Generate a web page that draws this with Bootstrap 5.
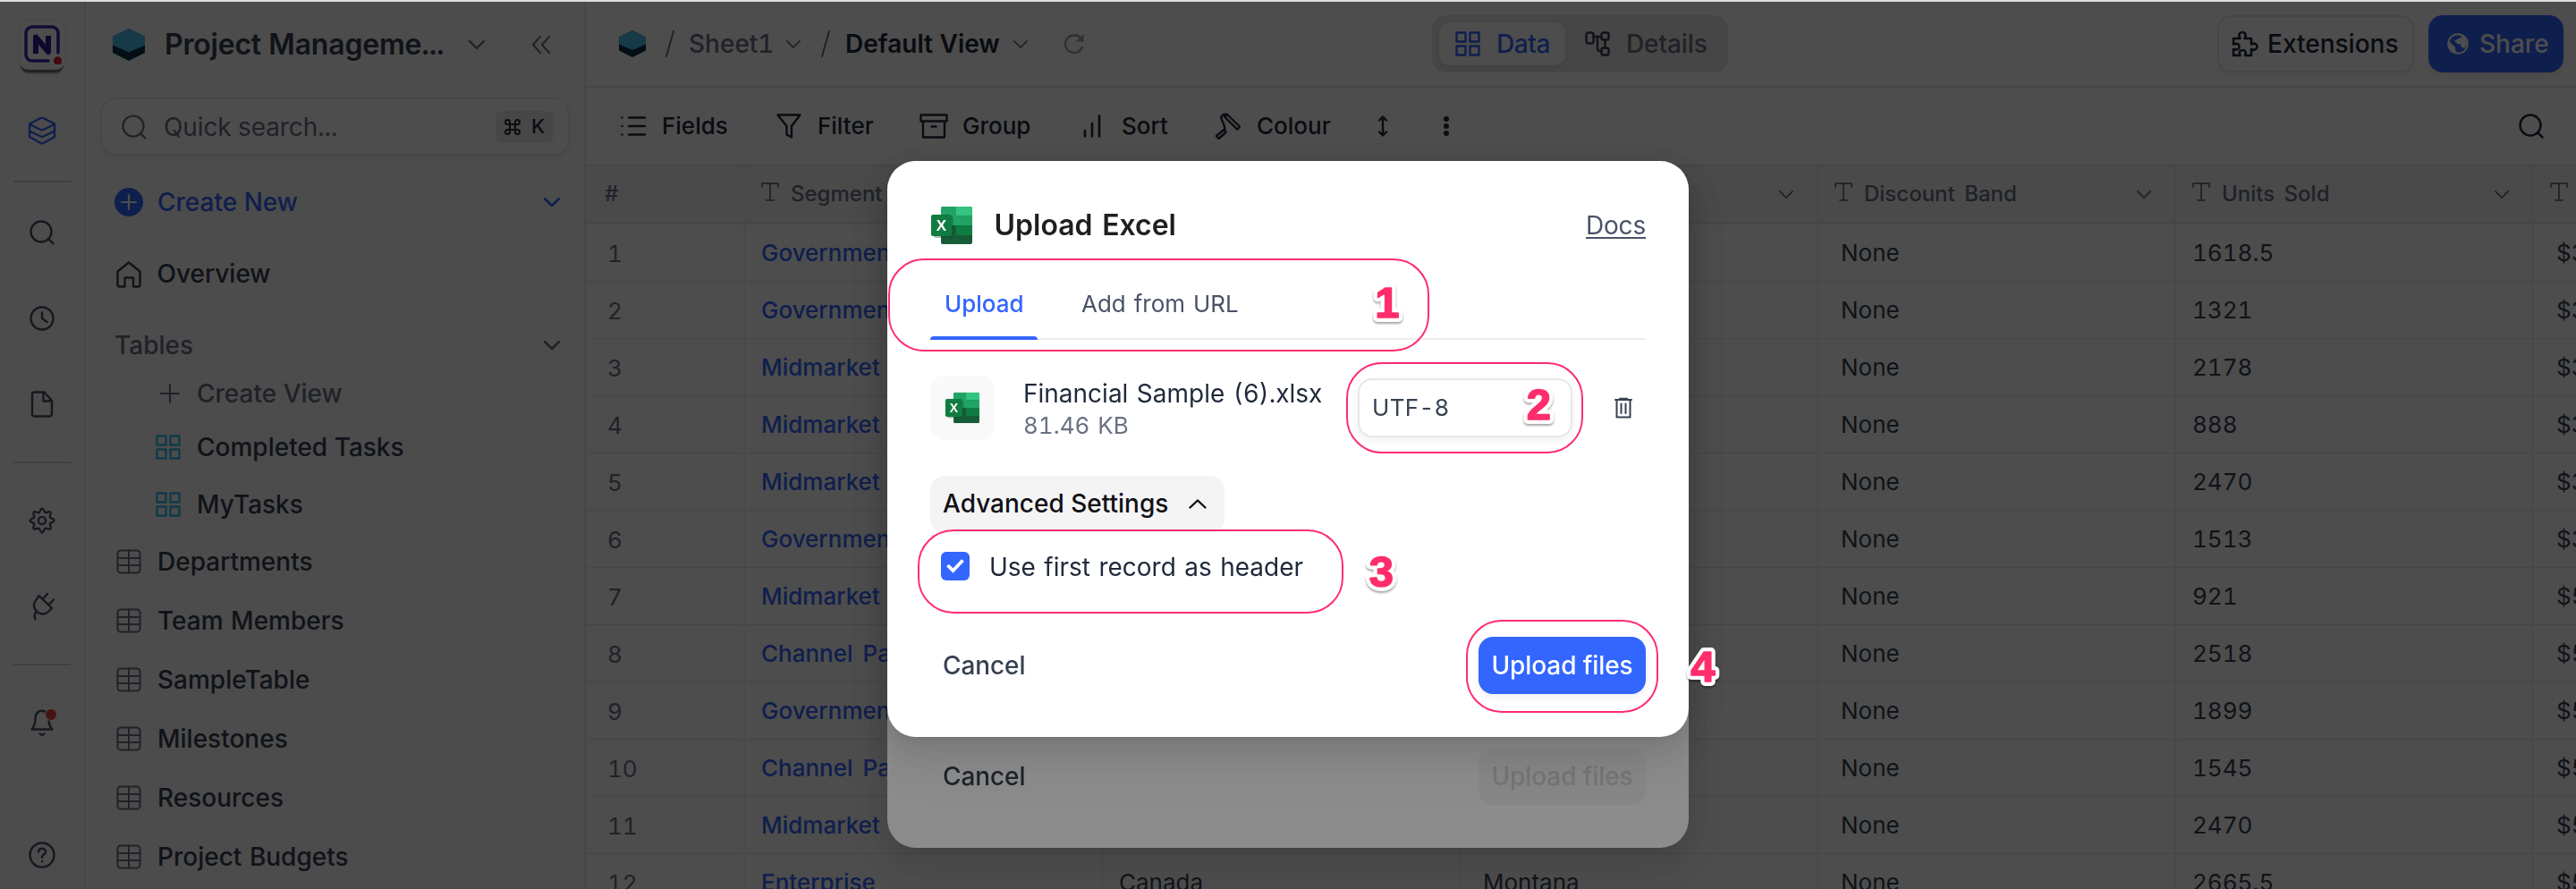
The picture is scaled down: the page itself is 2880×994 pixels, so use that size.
<!DOCTYPE html>
<html lang="en">
<head>
<meta charset="utf-8">
<title>Upload Excel</title>
<link href="https://cdn.jsdelivr.net/npm/bootstrap@5.3.0/dist/css/bootstrap.min.css" rel="stylesheet">
<style>
  html, body { height: 100%; overflow: hidden; }
  body { font-family: Inter, "Liberation Sans", sans-serif; font-feature-settings: "tnum"; font-size: 28px; line-height: 1.25; color: #374151; background: #dcdee0; stroke-width: 2; }
  svg { fill: none; stroke: currentColor; stroke-linecap: round; stroke-linejoin: round; flex: none; display: block; }
  .app { height: 992px; margin-top: 2px; background: #fff; white-space: nowrap; }
  .rail { width: 96px; background: #fafafa; border-right: 2px solid #ebebed; color: #4a5268; flex: none; }
  .rail-item { height: 96px; width: 94px; flex: none; }
  .rail-gap { height: 34px; flex: none; }
  .rail-line { width: 64px; height: 2px; background: #d5d5d9; }
  .logo-box { width: 54px; height: 56px; border: 2px solid #f0f0f2; border-radius: 12px; background: #fff; box-shadow: 0 5px 0 -2px #707070, 0 9px 0 -4px #c4c4c4; }
  .side { width: 559px; background: #fafafa; border-right: 2px solid #e7e7e9; padding: 0 18px; flex: none; color: #374151; }
  .side-row { padding-left: 15px; height: 66px; font-weight: 500; color: #374151; flex: none; }
  .side-row svg:first-child { margin-right: 15px; color: #6a7184; }
  .ink { color: #374151 !important; }
  .muted { color: #6a7184 !important; }
  .brand { color: #36f !important; }
  .sky { color: #36bff2 !important; }
  .search-box { margin-top: 13px; height: 61px; border-radius: 16px; background: #fff; box-shadow: 0 0 0 2px #ececee, 0 4px 8px rgba(0,0,0,.04); padding: 0 16px; color: #6a7184; }
  .key { background: #ebebed; border-radius: 8px; height: 36px; width: 65px; font-size: 22px; font-weight: 500; color: #1f293a; gap: 12px; }
  .topbar { height: 96px; border-bottom: 2px solid #e7e7e9; padding: 0 14px 0 37px; }
  .crumbs { width: 909px; }
  .seg { width: 331px; height: 64px; border-radius: 16px; background: #e7e7e9; padding: 8px; font-weight: 500; }
  .seg-on { width: 141px; height: 48px; background: #fff; border-radius: 12px; box-shadow: 0 3px 6px rgba(0,0,0,.08); color: #36f; font-weight: 500; padding-left: 18px; }
  .btn-ext, .btn-share { height: 64px; border-radius: 16px; font-weight: 500; box-shadow: 0 4px 8px rgba(0,0,0,.06); }
  .btn-ext { width: 220px; border: 2px solid #e7e7e9; padding-left: 14px; background: #fff; color: #1f293a; }
  .btn-share { width: 151px; background: #36f; color: #fff; padding-left: 21px; }
  .tools { height: 88px; border-bottom: 2px solid #e7e7e9; padding-left: 39px; display: grid; grid-template-columns: 174px 160px 179px 151px 173px 72px 1fr; align-items: center; font-size: 26px; font-weight: 500; color: #1f293a; }
  .tools > div { display: flex; align-items: center; gap: 18px; }
  .grid-tbl { table-layout: fixed; width: 2576px; border-collapse: separate; border-spacing: 0; font-size: 26px; color: #374151; }
  .grid-tbl th { height: 65px; background: #f4f4f5; border-bottom: 2px solid #e7e7e9; border-left: 2px solid #ebebed; font-size: 24px; font-weight: 500; color: #6a7184; padding: 0 34px 2px 17px; }
  .grid-tbl td { height: 64px; border-bottom: 1.5px solid #e7e7e9; border-left: 2px solid #f0f0f2; padding: 2px 0 0 18px; }
  .grid-tbl th:first-child, .grid-tbl td:first-child { border-left: 0; }
  .grid-tbl th:first-child { padding-left: 21px; }
  .grid-tbl td:first-child { padding-left: 24px; color: #6a7184; padding-top: 4px; }
  .grid-tbl td.txt { padding-left: 25px; }
  .grid-tbl .key-col { color: #36f; font-weight: 500; }
  .veil { position: fixed; inset: 2px 0 0 0; background: rgba(0,0,0,.45); }
  .sheet { position: relative; width: 896px; margin: 178px auto 0; background: #fff; border-radius: 32px; padding: 48px; display: flex; flex-direction: column; box-shadow: 0 12px 32px rgba(0,0,0,.08), 0 6px 12px -8px rgba(0,0,0,.12), 0 18px 56px 16px rgba(0,0,0,.07); white-space: nowrap; }
  .sheet-back { height: 768px; }
  .sheet-front { height: 644px; word-spacing: 1.9px; }
  .act { height: 64px; line-height: 63px; font-size: 28px; font-weight: 500; padding: 0 14px; border-radius: 16px; border: 0; color: #374151; background: none; letter-spacing: -.1px; word-spacing: 0; }
  .act-go { background: #36f; color: #fff; width: 187px; padding: 0; text-align: center; box-shadow: 0 4px 8px rgba(0,0,0,.06); }
  .act-off { background: #f6f6f7; color: #d5d5d9; width: 187px; padding: 0; text-align: center; }
  .sheet-title { font-size: 32px; font-weight: 600; color: #1f1f1f; margin-left: 23.5px; word-spacing: 2px; }
  .docs { color: #4a5268; text-decoration: underline; text-decoration-thickness: 2px; text-underline-offset: 3px; text-decoration-skip-ink: none; padding-top: 1px; letter-spacing: -.2px; }
  .tabs-row { height: 76px; margin-top: 28px; gap: 33px; box-shadow: inset 0 -2px #ededef; font-size: 26px; line-height: 72px; }
  .tab-link { padding: 0 16px; color: #4a5268; position: relative; }
  .tab-on { color: #36f; font-weight: 500; width: 120px; }
  .tab-on::after { content: ""; position: absolute; left: 0; right: 0; bottom: 0; height: 4px; background: #36f; border-radius: 4px 4px 0 0; }
  .file-ico { width: 72px; height: 72px; border-radius: 16px; background: #f9f9fa; }
  .pick { width: 240px; height: 66px; border: 2px solid #e7e7e9; border-radius: 16px; font-size: 26px; box-shadow: 0 4px 8px rgba(0,0,0,.06); padding-left: 14px; color: #374151; letter-spacing: .3px; }
  .adv { width: 329px; height: 64px; margin-top: 40px; border-radius: 16px; background: #f4f4f5; color: #101015; font-weight: 500; padding: 0 20px 1px 14px; word-spacing: 0; }
  .check-box { width: 32px; height: 32px; border-radius: 6px; background: #36f; color: #fff; margin-left: 12px; }
  .ring { position: absolute; border: 2px solid #ff2d6c; border-radius: 40px; }
  .ring-1 { left: 1px; top: 109px; width: 605px; height: 104px; }
  .ring-2 { left: 513px; top: 225px; width: 265px; height: 102px; }
  .ring-3 { left: 34px; top: 412px; width: 476px; height: 94px; }
  .ring-4 { left: 647px; top: 513px; width: 215px; height: 104px; }
  .notes { position: absolute; left: 0; top: 0; overflow: visible; filter: drop-shadow(0 2px 1px rgba(0,0,0,.35)); }
  .notes text { font: 700 49px "Liberation Sans", Arial, sans-serif; fill: #ff2d6c; text-anchor: middle; text-shadow: none; stroke: #ff2d6c; stroke-width: 1.6px; }
  .notes .halo { stroke: #fff; stroke-width: 10px; fill: #fff; }
  .xl text { font: 700 17px "Liberation Sans", Arial, sans-serif; fill: #fff; stroke: none; text-anchor: middle; }
</style>
</head>
<body>
<svg width="0" height="0" style="position:absolute">
  <symbol id="cube" viewBox="0 0 36 36"><path d="M0 9 18 0l18 9v18l-18 9L0 27z" fill="#0a3048" stroke="none"/><path d="M0 9 18 0l18 9v9.500L18 26.500 0 18.500z" fill="#4cc0f0" stroke="none"/></symbol>
  <symbol id="down" viewBox="0 0 18 10"><path d="m1 1 8 8 8-8"/></symbol>
  <symbol id="find" viewBox="0 0 28 28"><circle cx="13" cy="13" r="11.500"/><path d="m21.500 21.500 5 5"/></symbol>
  <symbol id="four" viewBox="0 0 28 28"><path d="M1.500 1.500h10v10h-10zM16.500 1.500h10v10h-10zM1.500 16.500h10v10h-10zM16.500 16.500h10v10h-10z"/></symbol>
  <symbol id="tbl" viewBox="0 0 28 28"><rect x="1.500" y="1.500" width="25" height="25" rx="3.500"/><path d="M14 1.500v25M1.500 10h25M1.500 18h25"/></symbol>
  <symbol id="tee" viewBox="0 0 20 21"><path d="M1 5V1.200h18V5M10 1.200v18.600M6 19.800h8"/></symbol>
  <symbol id="xl" viewBox="0 0 46 42"><g stroke="none"><rect x="11" width="35" height="42" rx="2" fill="#185c37"/><path d="M13 0h16v21H11V2a2 2 0 0 1 2-2z" fill="#21a366"/><path d="M28 0h16a2 2 0 0 1 2 2v8.500H28z" fill="#33c481"/><path d="M28 10.500h18V21H28z" fill="#21a366"/><path d="M28 21h18v11H28z" fill="#107c41"/><rect x="3" y="11" width="22" height="24" rx="2" fill="#0b4a2a" opacity=".35"/><rect y="9" width="23" height="24" rx="2" fill="#107c41"/></g></symbol>
</svg>

<div class="app d-flex overflow-hidden">
  <nav class="rail d-flex flex-column align-items-center">
    <div class="rail-item d-flex justify-content-center" style="padding-top:20px">
      <div class="logo-box d-flex justify-content-center pt-1">
        <svg width="44" height="44" viewBox="0 0 44 44"><path d="M29 40H11a7 7 0 0 1-7-7V9a7 7 0 0 1 7-7h22a7 7 0 0 1 7 7v22" stroke="#3b28b8" stroke-width="3.500"/><path d="M15 32V13.500L29 30V12" stroke="#2c1c96" stroke-width="6" stroke-linecap="butt"/><circle cx="39.500" cy="40" r="4.700" fill="#e5173f" stroke="none"/></svg>
      </div>
    </div>
    <div class="rail-item d-flex align-items-center justify-content-center brand"><svg width="32" height="32" viewBox="0 0 32 32" stroke-width="2.400"><path d="M2 8.500 14.500 2q1.500-.8 3 0L30 8.500v14.500L17.500 30q-1.500.8-3 0L2 23zM2 9l12.500 6q1.500.8 3 0L30 9M2 16.500l12.500 6q1.500.8 3 0L30 16.500"/></svg></div>
    <div class="rail-gap d-flex align-items-center" style="height:18px"><div class="rail-line"></div></div>
    <div class="rail-item d-flex align-items-center justify-content-center"><svg width="28" height="28" stroke-width="2.400"><use href="#find"/></svg></div>
    <div class="rail-item d-flex align-items-center justify-content-center"><svg width="28" height="28" viewBox="0 0 28 28" stroke-width="2.400"><circle cx="14" cy="14" r="12.500"/><path d="M14 7.500V14l5.500 4"/></svg></div>
    <div class="rail-item d-flex align-items-center justify-content-center"><svg width="26" height="30" viewBox="0 0 26 30" stroke-width="2.400"><path d="M4 1.500h11.500L24 11v15a2.500 2.500 0 0 1-2.500 2.500h-17A2.500 2.500 0 0 1 2 26V4a2.500 2.500 0 0 1 2-2.500zM14.500 2v9.500H24"/></svg></div>
    <div class="rail-gap d-flex align-items-center"><div class="rail-line"></div></div>
    <div class="rail-item d-flex align-items-center justify-content-center"><svg width="30" height="30" viewBox="0 0 24 24" stroke-width="1.900"><circle cx="12" cy="12" r="3.300"/><path d="M12 1.300c1.900 0 1.500 2.900 2.900 3.500s3.300-1.700 4.600-.4-1.100 3.200-.5 4.600 3.700 1 3.700 3-2.900 1.500-3.500 2.900 1.600 3.300.3 4.600-3.200-1.100-4.600-.5-1 3.700-2.900 3.700-1.500-3.100-2.900-3.700-3.300 1.700-4.600.4 1.100-3.200.5-4.600S1.300 13.900 1.300 12s3.100-1.500 3.700-2.900-1.700-3.300-.4-4.600 3.200 1.100 4.600.5S10.100 1.300 12 1.300z"/></svg></div>
    <div class="rail-item d-flex align-items-center justify-content-center"><svg width="30" height="32" viewBox="0 0 30 32" stroke-width="2.400"><path d="m11.500 4 14.500 14-3.500 3.500c-4 4-9.500 4-13.500 0s-4-9.500 0-13.500zM15.500 8 21 2M22 14.500l6-6M9 21.500c-2.500 2-3 5-1.500 9"/></svg></div>
    <div class="rail-gap d-flex align-items-center"><div class="rail-line"></div></div>
    <div class="rail-item d-flex align-items-center justify-content-center"><svg width="34" height="34" viewBox="0 0 34 34" stroke-width="2.400"><path d="M20 4.500C13 2 9.500 7 9.500 12.500c0 6-1.500 9-4 12h23c-2-2-3.500-5-4-9M14.500 29.500q2.500 2.500 5 0"/><circle cx="27" cy="8" r="6" fill="#e8463c" stroke="none"/></svg></div>
    <div class="rail-item d-flex align-items-center justify-content-center" style="margin-top:52px"><svg width="30" height="30" viewBox="0 0 30 30" stroke-width="2.400"><circle cx="15" cy="15" r="13.500"/><path d="M11 11.500c.5-5.500 8.500-4.500 8 0-.3 3-4 3-4 6.200M15 22v.2"/></svg></div>
  </nav>

  <aside class="side d-flex flex-column">
    <div class="d-flex align-items-center" style="height:96px;padding-left:12px">
      <svg width="36" height="36"><use href="#cube"/></svg>
      <span class="ink" style="font-size:32px;font-weight:600;margin-left:22px;letter-spacing:-.2px">Project Manageme...</span>
      <svg class="muted ms-auto" width="18" height="10" style="margin-right:53px" stroke-width="2.400"><use href="#down"/></svg>
      <svg class="muted" width="20" height="20" viewBox="0 0 20 20" style="margin-right:20px"><path d="m9 1-8 9 8 9M19 1l-8 9 8 9"/></svg>
    </div>
    <div class="search-box d-flex align-items-center">
      <svg width="28" height="28" style="margin:0 19px 0 6px" stroke-width="2.200"><use href="#find"/></svg>
      <span style="letter-spacing:-.1px;padding-top:1px">Quick search...</span>
      <span class="key ms-auto d-flex align-items-center justify-content-center"><svg width="18" height="18" viewBox="0 0 18 18"><path d="M6 6h6v6H6zM6 6V3.500A2.500 2.500 0 1 0 3.500 6H6M12 6h2.500A2.500 2.500 0 1 0 12 3.500V6M12 12v2.500a2.500 2.500 0 1 0 2.500-2.500H12M6 12H3.500A2.500 2.500 0 1 0 6 14.500V12"/></svg>K</span>
    </div>
    <div class="side-row d-flex align-items-center brand" style="height:108px;padding-left:14px">
      <svg class="brand" width="32" height="32" viewBox="0 0 32 32" style="margin-right:16px"><circle cx="16" cy="16" r="16" fill="currentColor" stroke="none"/><path d="M16 8v16M8 16h16" stroke="#fff" stroke-width="2.200"/></svg>Create New
      <svg class="ms-auto" width="18" height="10" stroke-width="2.600" style="margin-right:9px"><use href="#down"/></svg>
    </div>
    <div class="side-row d-flex align-items-center" style="height:53px;padding-left:16px"><svg class="ink" width="28" height="30" viewBox="0 0 28 30" stroke-width="2.400"><path d="M1.500 11.500 14 1.500l12.500 10v15a2 2 0 0 1-2 2H19V18.500H9.500v10h-6a2 2 0 0 1-2-2z"/></svg><span style="margin-left:2.500px">Overview</span></div>
    <div class="side-row d-flex align-items-center muted" style="margin-top:20px"><span style="margin-left:-1px">Tables</span><svg class="ms-auto muted" width="18" height="10" stroke-width="2.600" style="margin-right:9px"><use href="#down"/></svg></div>
    <div class="side-row d-flex align-items-center muted" style="height:42px;padding-left:65px"><svg width="22" height="22" viewBox="0 0 22 22" style="margin-right:19px"><path d="M11 1v20M1 11h20"/></svg>Create View</div>
    <div class="side-row d-flex align-items-center" style="height:64px;padding-left:60px;margin-top:7px"><svg class="sky" width="28" height="28" stroke-width="2.400" style="margin-right:18px"><use href="#four"/></svg>Completed Tasks</div>
    <div class="side-row d-flex align-items-center" style="height:64px;padding-left:60px"><svg class="sky" width="28" height="28" stroke-width="2.400" style="margin-right:18px"><use href="#four"/></svg>MyTasks</div>
    <div id="tables" style="margin-top:-1px"></div>
  </aside>

  <main class="flex-grow-1 overflow-hidden">
    <header class="topbar d-flex align-items-center">
      <div class="crumbs d-flex align-items-center muted">
        <svg width="30" height="30"><use href="#cube"/></svg>
        <svg width="10" height="30" viewBox="0 0 10 30" style="margin-left:22px"><path d="M9 1 1 29"/></svg>
        <span style="margin-left:16px;width:93px;font-weight:500">Sheet1</span>
        <svg width="16" height="9" viewBox="0 0 18 10" style="margin-left:16px"><path d="m1 1 8 8 8-8"/></svg>
        <svg width="10" height="30" viewBox="0 0 10 30" style="margin-left:23px"><path d="M9 1 1 29"/></svg>
        <span style="margin-left:17px;width:172px;font-weight:600;color:#1f293a">Default View</span>
        <svg width="16" height="9" viewBox="0 0 18 10" style="margin-left:16px"><path d="m1 1 8 8 8-8"/></svg>
        <svg width="24" height="24" viewBox="0 0 24 24" style="margin-left:40px;color:#9aa2af" stroke-width="2.400"><path d="M21 15.500A9.800 9.800 0 1 1 19.500 6"/><path d="M22 2v7h-7z" fill="currentColor" stroke-width="1"/></svg>
      </div>
      <div class="seg d-flex align-items-center">
        <div class="seg-on d-flex align-items-center"><svg width="28" height="28" stroke-width="2.400" style="margin-right:18px"><use href="#four"/></svg><span style="letter-spacing:-.4px">Data</span></div>
        <svg width="28" height="28" viewBox="0 0 28 28" stroke-width="2.400" style="margin-left:22px;margin-right:18px"><rect x="1.500" y="1.500" width="8" height="12" rx="2"/><rect x="18.500" y="1.500" width="8" height="8" rx="2"/><rect x="18.500" y="18.500" width="8" height="8" rx="2"/><path d="M9.500 6h9M22.500 9.500v9M14 6v13q0 3.500 4.500 3.500"/></svg><span class="muted" style="letter-spacing:-.1px">Details</span>
      </div>
      <div class="btn-ext d-flex align-items-center ms-auto"><svg width="30" height="30" viewBox="0 0 30 30" stroke-width="2.600" style="margin-right:10px"><path d="M2 9h7.500C7 4.500 9 2 12 2s5 2.500 2.500 7H22v6.500c4-2 6.500 0 6.500 2.500S26 23 22 21v7h-7c2-4.500-.5-6-3-6s-4.500 2-2.500 6H2v-7c5 1.500 6.500-.5 6.500-3S7 14 2 15.500z"/></svg>Extensions</div>
      <div class="btn-share d-flex align-items-center" style="margin-left:16px"><svg width="24" height="24" viewBox="0 0 24 24" style="margin-right:12px"><circle cx="12" cy="12" r="10.800"/><path d="M2 9.500 8.500 16v3l3 3.500C4 22 1 16 2 9.500zM9 9l3 3h4v3l3 1.500C23 13 22 5 16.500 2.500V5L13 6.500z" fill="#fff" stroke-width="1"/></svg>Share</div>
    </header>
    <div class="tools">
      <div><svg width="28" height="24" viewBox="0 0 28 24" stroke-width="2.400"><path d="M9 2.500h18M9 12h18M9 21.500h18M1.500 2.500h.1M1.500 12h.1M1.500 21.500h.1"/></svg>Fields</div>
      <div><svg width="28" height="28" viewBox="0 0 28 28" stroke-width="2.400"><path d="M1.500 1.500h25L17 14v12.500l-5.500-3V14z"/></svg>Filter</div>
      <div><svg width="32" height="28" viewBox="0 0 32 28" stroke-width="2.400" style="margin-right:-2px"><path d="M1.500 1.500h29v7h-29zM4 8.500v18h24v-18M13.500 14.500h5"/></svg>Group</div>
      <div style="padding-left:4px"><svg width="20" height="26" viewBox="0 0 20 26" stroke-width="2.600" style="margin-right:5px"><path d="M2 18v6.500M10 10v14.500M18 1.500v23"/></svg>Sort</div>
      <div><svg width="30" height="30" viewBox="0 0 30 30" stroke-width="2.400" style="margin-right:-1px"><path d="m11 4.500 3-2.500 14 13.500-2.800 3.200zM14 2C9 1 6 4 8 8c2 5 4.500 8 3 12M11 18.500l-9 7.500 2.500 3 8-7z"/></svg>Colour</div>
      <div style="padding-left:9px"><svg width="12" height="24" viewBox="0 0 12 24" stroke-width="2.400"><path d="M6 2v20M2 5.500l4-4 4 4M2 18.500l4 4 4-4"/></svg></div>
      <div class="justify-content-between" style="padding-left:11px;padding-right:36px"><svg width="6" height="24" viewBox="0 0 6 24"><path d="M3 4v.01M3 12v.01M3 20v.01" stroke-width="6"/></svg><svg width="28" height="28" stroke-width="2.500"><use href="#find"/></svg></div>
    </div>
    <table class="grid-tbl">
      <colgroup><col style="width:176px"><col style="width:400px"><col style="width:400px"><col style="width:400px"><col style="width:400px"><col style="width:400px"><col style="width:400px"></colgroup>
      <thead><tr id="head"><th>#</th></tr></thead>
      <tbody id="rows"></tbody>
    </table>
  </main>
</div>

<div class="veil">
  <div class="sheet sheet-back">
    <div class="mt-auto d-flex justify-content-between"><button class="act">Cancel</button><button class="act act-off">Upload files</button></div>
  </div>
</div>

<div class="veil">
  <div class="sheet sheet-front">
    <div class="d-flex align-items-center" style="height:48px">
      <svg class="xl" width="48" height="42" viewBox="-1 0 48 42"><use href="#xl" width="46" height="42"/><text x="11.500" y="27">X</text></svg>
      <span class="sheet-title">Upload Excel</span>
      <a class="docs ms-auto">Docs</a>
    </div>
    <div class="tabs-row d-flex"><span class="tab-link tab-on">Upload</span><span class="tab-link">Add from URL</span></div>
    <div class="d-flex align-items-center" style="height:72px;margin-top:40px">
      <div class="file-ico d-flex align-items-center justify-content-center"><svg class="xl" width="38" height="36" viewBox="0 0 46 42"><use href="#xl" width="46" height="42"/><text x="11.500" y="27">X</text></svg></div>
      <div style="margin-left:32px;line-height:36px;margin-top:4px"><div style="color:#1f293a">Financial Sample (6).xlsx</div><div style="font-size:26px;color:#6a7184">81.46 KB</div></div>
      <div class="pick d-flex align-items-center ms-auto">UTF-8</div>
      <div class="d-flex justify-content-center" style="width:82px;padding-left:32px;color:#374151"><svg width="20" height="24" viewBox="0 0 20 24"><path d="M1 3h18M6 1.800h8M2.500 3v19.500h15V3M7.500 7.500v10.500M12.500 7.500v10.500"/></svg></div>
    </div>
    <div class="adv d-flex align-items-center justify-content-between">Advanced Settings<svg width="20" height="11" viewBox="0 0 20 11" stroke-width="2.400"><path d="m1.500 9.500 8.500-8 8.500 8"/></svg></div>
    <div class="d-flex align-items-center" style="margin-top:21px;height:32px;color:#1f293a">
      <span class="check-box d-flex align-items-center justify-content-center"><svg width="20" height="16" viewBox="0 0 20 16"><path d="m1.500 7 6 6 11-11.500" style="stroke-width:3.800;stroke-linecap:butt;stroke-linejoin:miter"/></svg></span>
      <span style="margin-left:22px;padding-top:2px">Use first record as header</span>
    </div>
    <div class="mt-auto d-flex justify-content-between"><button class="act">Cancel</button><button class="act act-go">Upload files</button></div>
    <div class="ring ring-1"></div><div class="ring ring-2"></div><div class="ring ring-3"></div><div class="ring ring-4"></div>
    <svg class="notes" width="896" height="644">
      <text class="halo" x="559" y="175" aria-hidden="true">1</text><text class="halo" x="728.500" y="289" aria-hidden="true">2</text><text class="halo" x="552.500" y="476" aria-hidden="true">3</text><text class="halo" x="912" y="581.500" aria-hidden="true">4</text>
      <text x="559" y="175">1</text><text x="728.500" y="289">2</text><text x="552.500" y="476">3</text><text x="912" y="581.500">4</text>
    </svg>
  </div>
</div>

<script src="https://cdn.jsdelivr.net/npm/bootstrap@5.3.0/dist/js/bootstrap.bundle.min.js"></script>
<script>
  document.getElementById('tables').innerHTML = ['Departments', 'Team Members', 'SampleTable', 'Milestones', 'Resources', 'Project Budgets']
    .map(t => `<div class="side-row d-flex align-items-center" style="padding-left:16px;word-spacing:1px"><svg width="28" height="28" style="margin-right:18px"><use href="#tbl"/></svg>${t}</div>`).join('');

  document.getElementById('head').innerHTML += ['Segment', '', '', 'Discount Band', 'Units Sold', '']
    .map(t => `<th><div class="d-flex align-items-center" style="word-spacing:4px"><svg width="20" height="21" style="margin:-5px 13px 0 1px" stroke-width="1.800"><use href="#tee"/></svg>${t}<svg class="ms-auto" width="16" height="9" viewBox="0 0 18 10" style="margin-right:-8px;margin-top:2px"><path d="m1 1 8 8 8-8"/></svg></div></th>`).join('');

  const data = [
    ['Government', '', '', '1618.5', '$3'], ['Government', '', '', '1321', '$3'],
    ['Midmarket', '', '', '2178', '$3'], ['Midmarket', '', '', '888', '$3'],
    ['Midmarket', '', '', '2470', '$3'], ['Government', '', '', '1513', '$3'],
    ['Midmarket', '', '', '921', '$5'], ['Channel Partners', '', '', '2518', '$5'],
    ['Government', '', '', '1899', '$5'], ['Channel Partners', '', '', '1545', '$5'],
    ['Midmarket', '', '', '2470', '$5'], ['Enterprise', 'Canada', 'Montana', '2665.5', '$5']];
  document.getElementById('rows').innerHTML = data
    .map((r, i) => `<tr><td>${i + 1}</td><td class="key-col" style="word-spacing:4px">${r[0]}</td><td>${r[1]}</td><td class="txt">${r[2]}</td><td class="txt">None</td><td>${r[3]}</td><td class="txt">${r[4]}</td></tr>`).join('');
</script>
</body>
</html>
